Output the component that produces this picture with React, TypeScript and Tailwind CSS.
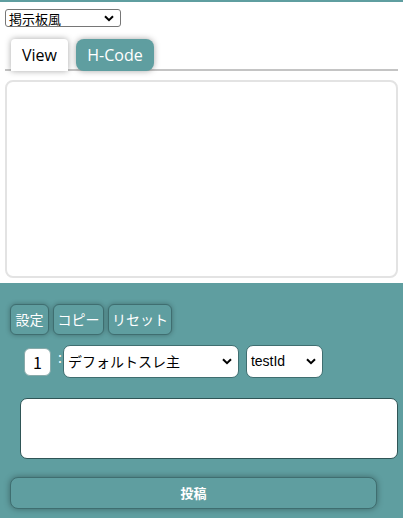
import React from "react";

const Chevron = () => (
  <svg width="10" height="7" viewBox="0 0 10 7" className="shrink-0">
    <path d="M1 1.2 L5 5.2 L9 1.2" fill="none" stroke="#000" strokeWidth="2" />
  </svg>
);

export default function App() {
  const jp = { fontFamily: '"Noto Sans CJK JP", "Noto Sans", sans-serif' };
  const buttons: [string, string][] = [
    ["設定", "w-[39px]"],
    ["コピー", "w-[51px]"],
    ["リセット", "w-[64px]"],
  ];
  return (
    <div className="w-[403px] h-[518px] overflow-hidden bg-white border-t-2 border-[#5f9ea0] flex flex-col" style={jp}>
      <div className="px-[5px] pt-[7px]">
        <div className="w-[116px] h-[18px] border border-[#767676] rounded-[3px] flex items-center justify-between pl-[3px] pr-[6px] text-[13px] leading-none text-black">
          <span>掲示板風</span>
          <Chevron />
        </div>
      </div>
      <div className="mx-[5px] mt-[11px] h-[33px] border-b-2 border-[#c4c4c4] flex items-end gap-[8px] pl-[6px]">
        <div className="w-[57px] h-[32px] bg-white rounded-t-[4px] shadow-[0_0_6px_rgba(0,0,0,0.35)] flex items-center justify-center text-[16px] text-black -mb-[2px] relative" style={{ fontFamily: '"Open Sans", "Noto Sans", sans-serif' }}>
          View
        </div>
        <div className="w-[78px] h-[32px] bg-[#5f9ea0] rounded-[8px] shadow-[0_0_6px_rgba(0,0,0,0.35)] flex items-center justify-center text-[16px] text-white -mb-[2px]" style={{ fontFamily: '"Open Sans", "Noto Sans", sans-serif' }}>
          H-Code
        </div>
      </div>
      <div className="mx-[5px] mt-[9px] h-[198px] border-2 border-[#e3e3e3] rounded-[8px]" />
      <div className="mt-[5px] flex-1 bg-[#5f9ea0] px-[10px] pt-[21px]">
        <div className="flex gap-[4px]">
          {buttons.map(([t, w]) => (
            <div key={t} className={`${w} h-[31px] rounded-[6px] border border-[#3f6e70] shadow-[0_0_5px_rgba(0,0,0,0.3)] bg-[#5f9ea0] text-white text-[14px] flex items-center justify-center`}>
              {t}
            </div>
          ))}
        </div>
        <div className="flex items-center mt-[10px] pl-[14px]">
          <div className="w-[27px] h-[28px] bg-white rounded-[6px] border border-[#8aa] flex items-center justify-center text-[16px] text-black">
            1
          </div>
          <span className="text-white text-[14px] ml-[7px] mr-[1px] -mt-[8px]">:</span>
          <div className="w-[176px] h-[33px] bg-white rounded-[7px] border border-[#3f6e70] flex items-center justify-between pl-[4px] pr-[6px] text-[14px] text-black">
            <span>デフォルトスレ主</span>
            <Chevron />
          </div>
          <div className="ml-[7px] w-[77px] h-[33px] bg-white rounded-[7px] border border-[#3f6e70] flex items-center justify-between pl-[4px] pr-[6px] text-[14px] text-black" style={{ fontFamily: '"Liberation Sans", Arial, sans-serif' }}>
            <span>testId</span>
            <Chevron />
          </div>
        </div>
        <div className="mt-[20px] ml-[10px] w-[378px] h-[61px] bg-white rounded-[7px] border border-[#2f5556]" />
        <div className="mt-[18px] w-[367px] h-[32px] rounded-[8px] border border-[#3f6e70] shadow-[0_0_6px_rgba(0,0,0,0.35)] bg-[#5f9ea0] text-white text-[13px] font-bold flex items-center justify-center">
          投稿
        </div>
      </div>
    </div>
  );
}
